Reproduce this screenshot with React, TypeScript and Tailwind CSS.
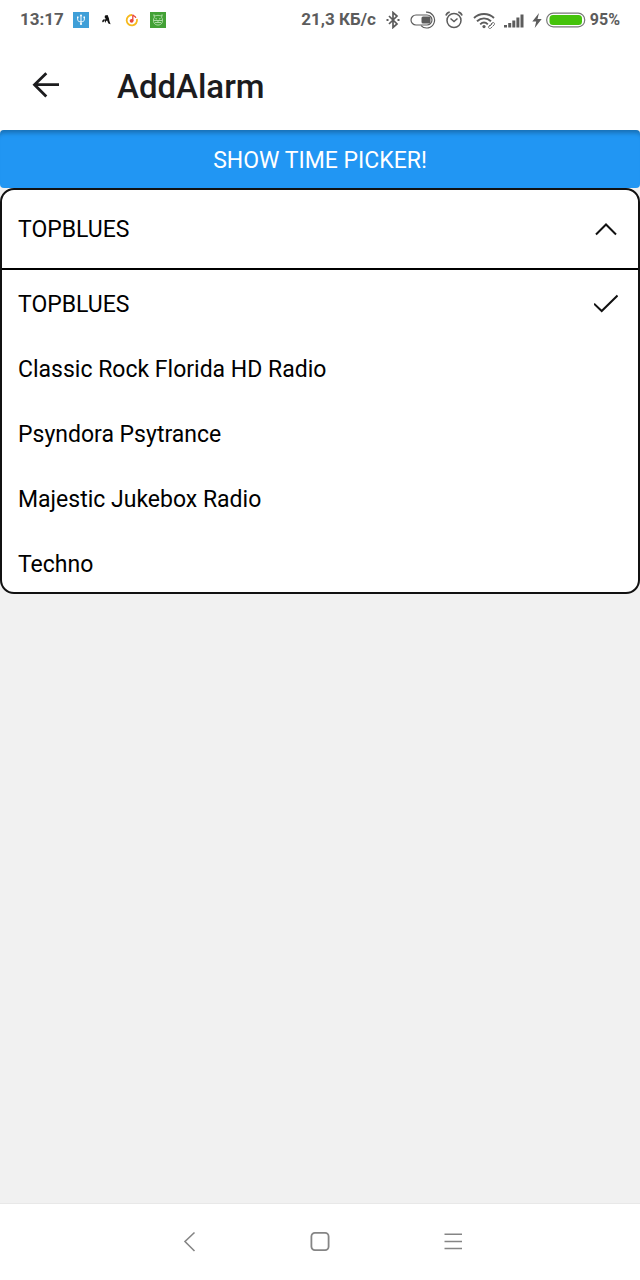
import { useState } from "react";

const stations = [
  "TOPBLUES",
  "Classic Rock Florida HD Radio",
  "Psyndora Psytrance",
  "Majestic Jukebox Radio",
  "Techno",
];

function StatusBar() {
  return (
    <div className="flex h-10 items-center justify-between pr-5 pl-5 text-[17px] font-bold text-[#5c5c5c]">
      <div className="flex items-center">
        <span className="w-[53px]">13:17</span>
        <svg className="mr-[10px] h-4 w-4" viewBox="0 0 16 16" fill="none" stroke="#fff" strokeWidth="1">
          <path d="M0 0h16v16H0z" fill="#3f9fd8" stroke="none" />
          <path d="M8 3v9M4.700 5.500v2.300c0 1.200 1 1.700 3.300 2.200M11.300 5.500v2.300c0 1.200-1 1.700-3.300 2.200" />
          <path d="M8 2 6.700 4.200h2.600z" fill="#fff" stroke="none" />
          <path d="M4 4.500h1.500V6H4zM10.500 4.500H12V6h-1.500z" fill="#fff" stroke="none" />
          <circle cx="8" cy="12" r="1.100" fill="#fff" stroke="none" />
        </svg>
        <svg className="mr-[9px] h-4 w-4" viewBox="0 0 16 16" fill="#111">
          <path d="M6 3.400 8.600 3l1.300 3.300.5 2.700 1.200 3.200-2.200-.600-1.300-3.200-1 .600-.8 2-.600-2 .9-2.500-1-1.300z" />
          <path d="m3 9 2.300-2.200.5 1.800L3.900 10.600z" />
        </svg>
        <svg className="mr-[10px] h-4 w-4" viewBox="0 0 16 16" fill="none">
          <path d="M8 3A5.200 5.200 0 1 0 12.900 7" stroke="#f6b91c" strokeWidth="1.800" />
          <path d="M8.800 9V2.600c.5 1.500 2.700 1.300 3 3.200" stroke="#e9483b" strokeWidth="1.300" />
          <circle cx="7.600" cy="8.800" r="1.900" fill="#e9483b" />
        </svg>
        <svg className="h-4 w-4" viewBox="0 0 16 16" fill="none" stroke="#c4e8bd" strokeWidth=".8">
          <path d="M0 0h16v16H0z" fill="#43a136" stroke="none" />
          <path d="M4.500 5.200 3.700 2.800l2 1c1.400-.600 3.200-.600 4.600 0l2-1-.8 2.400c1.300 1.700 1.300 4 .5 5.600-1.500 3-6.500 3-8 0-.8-1.600-.8-3.900.5-5.600z" />
          <path d="m5.500 6.500 1.500.5M10.500 6.500 9 7M4 8.500h8M5 10.500h6M8 8.500v2" />
        </svg>
      </div>
      <div className="flex items-center">
        <span className="mr-[9px]">21,3 КБ/с</span>
        <svg className="mr-[9px] h-[18px] w-4" viewBox="0 0 16 18" fill="none" stroke="#5c5c5c" strokeWidth="1.700">
          <path d="m4 5 8 8-4 3.500v-15L12 5l-8 8" />
          <path d="M1.500 9h2M12.500 9h2" strokeWidth="2" />
        </svg>
        <svg className="mr-[9px] h-[18px] w-[26px]" viewBox="0 0 26 18" fill="none" stroke="#5c5c5c" strokeWidth="1.200">
          <path d="M11 14H6a5 5 0 0 1 0-10h11a5 5 0 0 1 0 10H10" />
          <rect x="11.500" y="5.500" width="9" height="7" rx="1.500" fill="#5c5c5c" stroke="none" />
          <path d="M16 1.200a7.900 7.900 0 1 1-5 13.400" />
        </svg>
        <svg className="mr-[10px] h-[18px] w-[18px]" viewBox="0 0 18 18" fill="none" stroke="#5c5c5c" strokeWidth="1.500">
          <circle cx="9" cy="9.500" r="7" />
          <path d="m5.500 7.500 3.500 3L12.500 7.500" />
          <path d="M1 4.500C1.500 3 3 1.500 4.700 1.200M17 4.500C16.500 3 15 1.500 13.300 1.200" strokeWidth="1.800" />
        </svg>
        <svg className="mr-[9px] h-[18px] w-[22px]" viewBox="0 0 22 18" fill="none" stroke="#5c5c5c" strokeWidth="1.900">
          <path d="M1 7c5.500-5.300 14.500-5.300 20 0M4 10.200c4-3.800 10-3.800 14 0M7.200 13.300c2.300-2.300 5.300-2.300 7.600 0" />
          <circle cx="11" cy="15.600" r="1.600" fill="#5c5c5c" stroke="none" />
          <path d="m16.500 15.500 3-3m-2 1-1.500 1.500c-1.500 1.500.5 3.500 2 2l1-1m-1-3 1-1c1.500-1.500 3.500.5 2 2l-1.500 1.500" strokeWidth=".9" />
        </svg>
        <svg className="mr-2 h-[18px] w-5" viewBox="0 0 20 18" fill="#5c5c5c">
          <path d="M0 14h3v2.500H0zM4.200 12h3v4.500h-3zM8.300 9.500h3v7h-3zM12.400 6.500h3v10h-3zM16.500 3.500h3v13h-3z" />
        </svg>
        <svg className="mr-1 h-[18px] w-[10px]" viewBox="0 0 10 18" fill="#5c5c5c">
          <path d="M7 2 .3 10.500h3.900L2.700 17 9.700 8H5.500z" />
        </svg>
        <svg className="mr-1 h-[18px] w-10" viewBox="0 0 40 18" fill="none">
          <rect x=".7" y="2.200" width="38" height="13.600" rx="6.500" stroke="#777" strokeWidth="1.200" />
          <rect x="3.500" y="4" width="32.500" height="10" rx="3.500" fill="#45c30b" />
        </svg>
        <span className="text-[16px]">95%</span>
      </div>
    </div>
  );
}

export default function App() {
  const [selected, setSelected] = useState(stations[0]);
  const [open, setOpen] = useState(true);

  return (
    <div className="flex min-h-screen flex-col bg-[#f1f1f1] font-['Roboto',sans-serif] text-black">
      <header className="bg-white">
        <StatusBar />
        <div className="flex h-[90px] items-center pl-8">
          <button type="button" aria-label="Go back" className="mr-[57px]">
            <svg className="h-7 w-7" viewBox="0 0 28 28" fill="none" stroke="#1c1c1e" strokeWidth="2.800">
              <path d="M27 13.700H3M14.300 2.200 2.500 13.700l11.800 11.800" />
            </svg>
          </button>
          <h1 className="pt-1 text-[33px] leading-10 font-medium text-[#1c1c1e]">AddAlarm</h1>
        </div>
      </header>

      <main className="flex-1">
        <button
          type="button"
          className="block h-[58px] w-full rounded-[4px] bg-[#2196f3] pt-1 text-center text-[23px] text-white shadow-[inset_0_7px_4px_-4px_rgba(0,0,0,0.25)]"
        >
          SHOW TIME PICKER!
        </button>

        <div className="overflow-hidden rounded-[14px] border-2 border-[#111] bg-white text-[23px]">
          <button
            type="button"
            aria-expanded={open}
            onClick={() => setOpen(!open)}
            className="flex h-20 w-full items-center justify-between border-b-2 border-black pr-5 pl-4 text-left"
          >
            <span className="pt-[3px]">{selected}</span>
            <svg className="h-6 w-6" viewBox="0 0 24 24" fill="none" stroke="#111" strokeWidth="2">
              <path d="m2 17.500 10-10 10 10" />
            </svg>
          </button>
          {open && (
            <ul className="max-h-[322px] overflow-hidden pt-px">
              {stations.map((name) => (
                <li key={name}>
                  <button
                    type="button"
                    onClick={() => setSelected(name)}
                    className="flex h-[65px] w-full items-center justify-between pr-5 pl-4 text-left"
                  >
                    <span className="pt-[3px]">{name}</span>
                    {name === selected && (
                      <svg className="h-6 w-6" viewBox="0 0 24 24" fill="none" stroke="#111" strokeWidth="2">
                        <path d="M0 11.700 7.700 19 23.500 3.500" />
                      </svg>
                    )}
                  </button>
                </li>
              ))}
            </ul>
          )}
        </div>
      </main>

      <nav className="flex h-[77px] items-center justify-center gap-[109px] border-t border-[#e8e8e8] bg-white text-[#858585]">
        <button type="button" aria-label="Back">
          <svg className="h-6 w-6" viewBox="0 0 24 24" fill="none" stroke="currentColor" strokeWidth="1.600">
            <path d="M19.500 2.500 10 11.500l9.500 9.500" />
          </svg>
        </button>
        <button type="button" aria-label="Home">
          <svg className="h-6 w-6" viewBox="0 0 24 24" fill="none" stroke="currentColor" strokeWidth="1.800">
            <rect x="3.400" y="2.900" width="17.200" height="17.200" rx="3.500" />
          </svg>
        </button>
        <button type="button" aria-label="Menu">
          <svg className="h-6 w-6" viewBox="0 0 24 24" fill="none" stroke="currentColor" strokeWidth="1.600">
            <path d="M3.500 4.300h17.500M3.500 11.500h17.500M3.500 18.500h17.500" />
          </svg>
        </button>
      </nav>
    </div>
  );
}
